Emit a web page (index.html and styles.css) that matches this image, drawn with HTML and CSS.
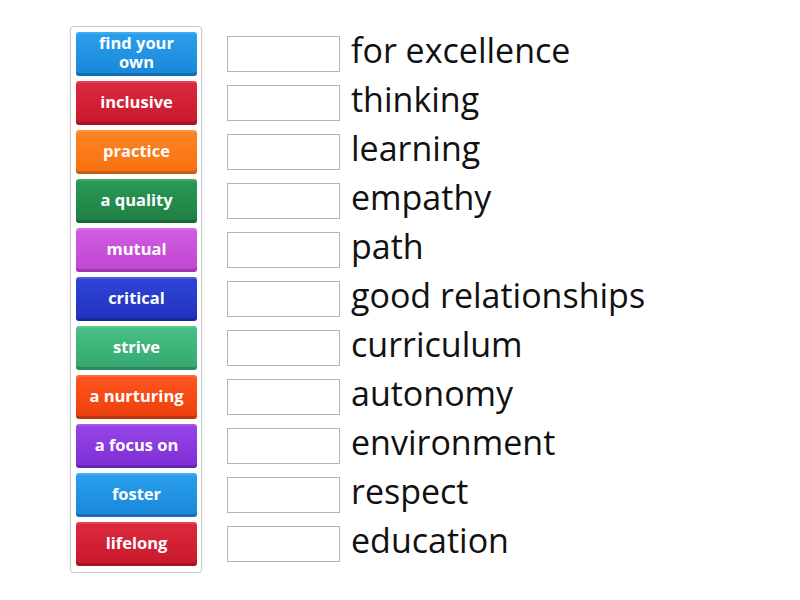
FILE: index.html
```html
<!DOCTYPE html>
<html lang="en">
<head>
<meta charset="utf-8">
<title>Match up</title>
<link rel="stylesheet" href="styles.css">
</head>
<body>
<div class="game">
  <div class="bank">
    <div class="tile c-blue two">find your own</div>
    <div class="tile c-red">inclusive</div>
    <div class="tile c-orange">practice</div>
    <div class="tile c-green">a quality</div>
    <div class="tile c-magenta">mutual</div>
    <div class="tile c-navy">critical</div>
    <div class="tile c-mint">strive</div>
    <div class="tile c-vermilion">a nurturing</div>
    <div class="tile c-purple">a focus on</div>
    <div class="tile c-blue">foster</div>
    <div class="tile c-red">lifelong</div>
  </div>
  <div class="rows">
    <div class="row"><div class="slot"></div><div class="word">for excellence</div></div>
    <div class="row"><div class="slot"></div><div class="word">thinking</div></div>
    <div class="row"><div class="slot"></div><div class="word">learning</div></div>
    <div class="row"><div class="slot"></div><div class="word">empathy</div></div>
    <div class="row"><div class="slot"></div><div class="word">path</div></div>
    <div class="row"><div class="slot"></div><div class="word">good relationships</div></div>
    <div class="row"><div class="slot"></div><div class="word">curriculum</div></div>
    <div class="row"><div class="slot"></div><div class="word">autonomy</div></div>
    <div class="row"><div class="slot"></div><div class="word">environment</div></div>
    <div class="row"><div class="slot"></div><div class="word">respect</div></div>
    <div class="row"><div class="slot"></div><div class="word">education</div></div>
  </div>
</div>
</body>
</html>
```

FILE: styles.css
```css
html, body {
  margin: 0;
  padding: 0;
  background: #ffffff;
}

.game {
  display: flex;
  align-items: flex-start;
  padding: 26px 0 0 70px;
  gap: 25px;
  font-family: "Open Sans", "Liberation Sans", sans-serif;
}

.bank {
  width: 121px;
  padding: 5px 4px 6px 5px;
  border: 1px solid #c9c9c9;
  border-radius: 4px;
  box-shadow: 0 1px 2px rgba(0,0,0,0.12);
  display: flex;
  flex-direction: column;
  gap: 5px;
}

.tile {
  height: 44px;
  border-radius: 3px;
  display: flex;
  align-items: center;
  justify-content: center;
  text-align: center;
  color: #ffffff;
  font-weight: 700;
  font-size: 16.5px;
  line-height: 19px;
  padding: 0 6px 3px;
  box-sizing: border-box;
  box-shadow: inset 0 -3px 0 rgba(0,0,0,0.18), inset 0 2px 0 rgba(255,255,255,0.12);
}

.tile.two {
  padding-bottom: 5px;
}

.c-blue { background: linear-gradient(#2aa0ee, #1a86d8); }
.c-red { background: linear-gradient(#dc2a3e, #c8182c); }
.c-orange { background: linear-gradient(#ff8526, #f5700f); }
.c-green { background: linear-gradient(#2b9a57, #1f7d44); }
.c-magenta { background: linear-gradient(#d25ee0, #bf45cf); }
.c-navy { background: linear-gradient(#2f45d8, #2131bd); }
.c-mint { background: linear-gradient(#46c185, #36a76f); }
.c-vermilion { background: linear-gradient(#ff5520, #ec3f0c); }
.c-purple { background: linear-gradient(#9645e6, #7d2ed5); }

.rows {
  display: flex;
  flex-direction: column;
  padding-top: 6px;
}

.row {
  display: flex;
  align-items: flex-start;
  height: 49px;
}

.slot {
  width: 111px;
  height: 34px;
  margin-top: 4px;
  border: 1px solid #b4b4b4;
  background: #ffffff;
  flex: none;
}

.word {
  margin-left: 11px;
  font-size: 34px;
  line-height: 36px;
  color: #111111;
  white-space: nowrap;
}
```
